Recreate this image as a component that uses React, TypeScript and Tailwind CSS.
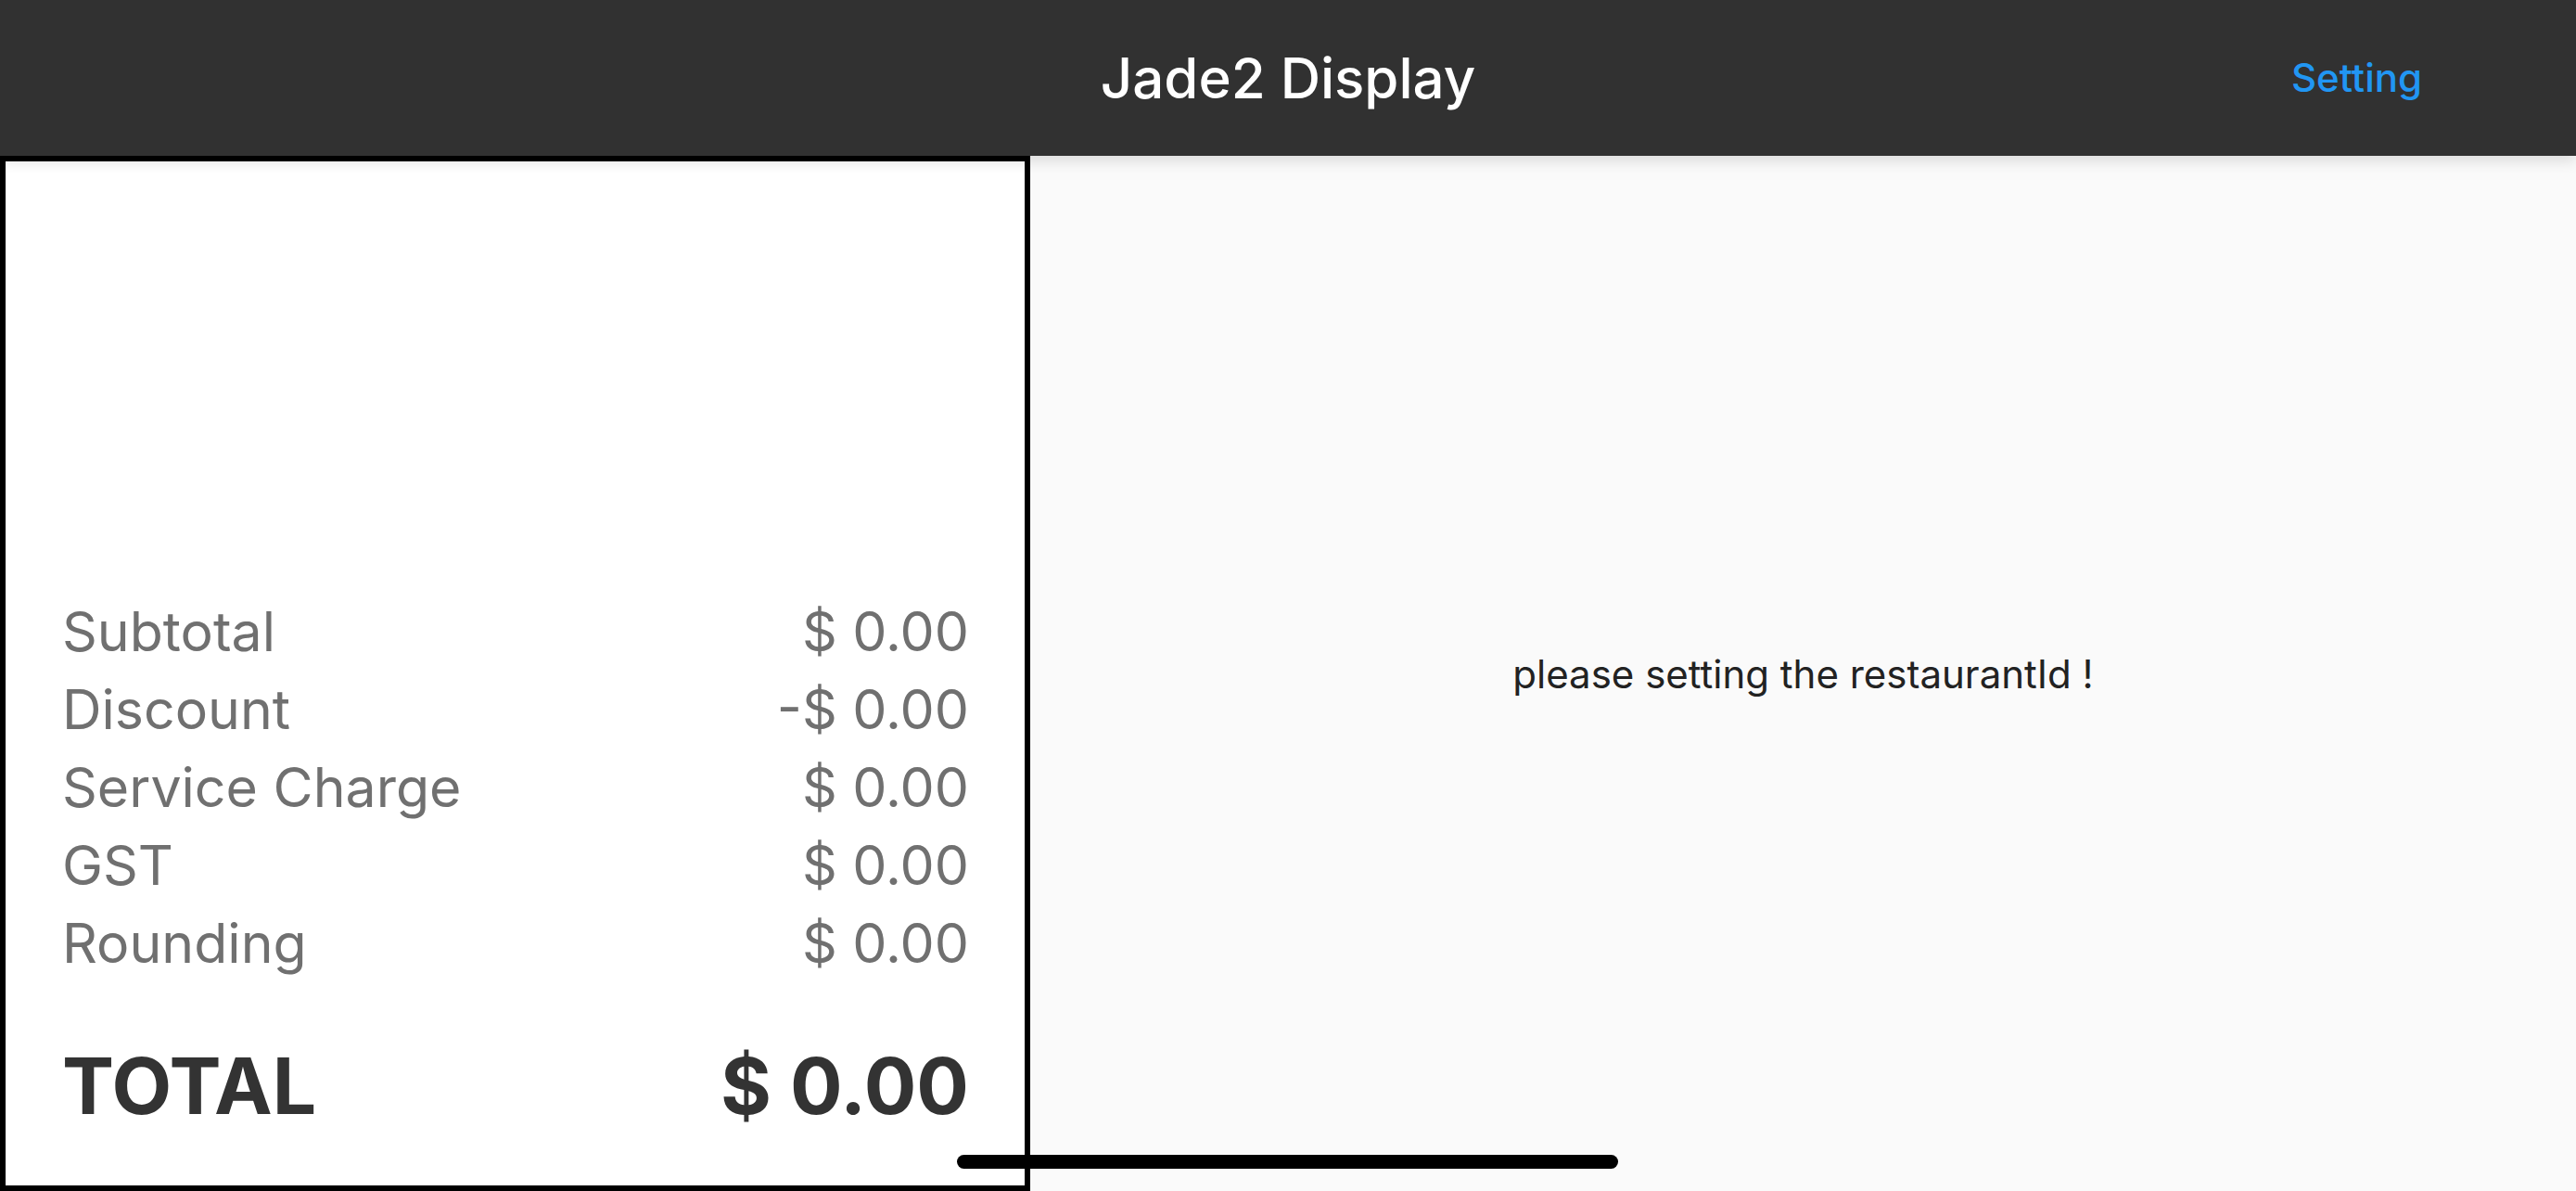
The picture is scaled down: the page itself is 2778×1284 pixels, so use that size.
import React from 'react';

const rows: { label: string; value: string }[] = [
  { label: 'Subtotal', value: '$ 0.00' },
  { label: 'Discount', value: '-$ 0.00' },
  { label: 'Service Charge', value: '$ 0.00' },
  { label: 'GST', value: '$ 0.00' },
  { label: 'Rounding', value: '$ 0.00' },
];

export default function App() {
  return (
    <div
      className="relative flex h-[1284px] w-[2778px] flex-col overflow-hidden bg-[#fafafa]"
      style={{ fontFamily: 'Inter, "Noto Sans", sans-serif' }}
    >
      {/* Top bar */}
      <header className="relative z-10 flex h-[168px] shrink-0 items-center justify-center bg-[#313131] shadow-[0_6px_14px_rgba(0,0,0,0.12)]">
        <h1 className="text-[60px] font-medium leading-none text-white">Jade2 Display</h1>
        <button className="absolute right-[166px] top-1/2 -translate-y-1/2 text-[42px] font-medium leading-none text-[#2196f3]">
          Setting
        </button>
      </header>

      <div className="flex flex-1">
        {/* Bill summary */}
        <div className="flex w-[1111px] shrink-0 flex-col justify-end border-[6px] border-black bg-white pb-[57px] pl-[61px] pr-[60px]">
          {rows.map(row => (
            <div key={row.label} className="flex justify-between text-[59px] leading-[84px] text-[#707070]">
              <span>{row.label}</span>
              <span>{row.value}</span>
            </div>
          ))}
          <div className="mt-[62px] flex justify-between text-[84px] font-bold leading-[100px] text-[#333333]">
            <span>TOTAL</span>
            <span>$ 0.00</span>
          </div>
        </div>

        {/* Message area */}
        <div className="flex flex-1 items-center justify-center">
          <p className="text-[42px] text-[#222222]">please setting the restaurantId !</p>
        </div>
      </div>

      {/* Home indicator */}
      <div className="absolute bottom-[24px] left-[1032px] h-[15px] w-[713px] rounded-full bg-black" />
    </div>
  );
}
